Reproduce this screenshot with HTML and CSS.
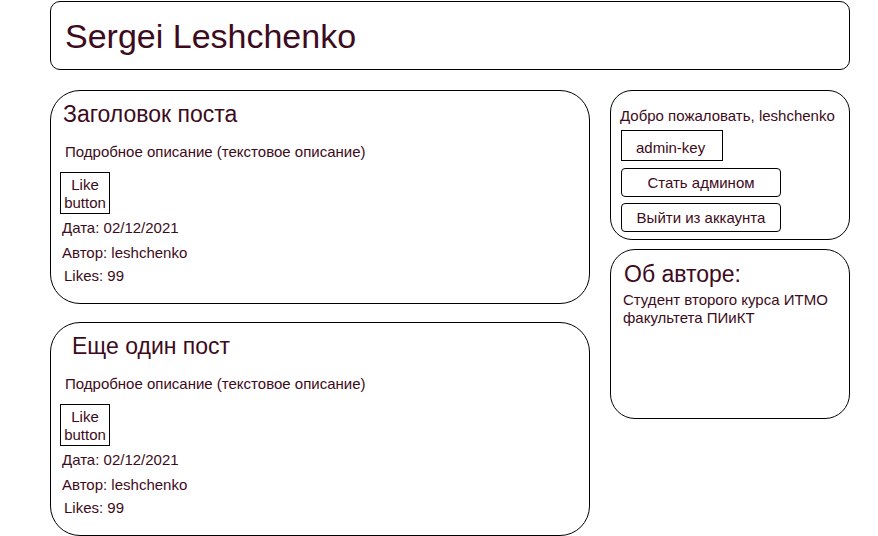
FILE: index.html
```html
<!DOCTYPE html>
<html lang="ru">
<head>
  <meta charset="UTF-8">
  <meta name="viewport" content="width=device-width, initial-scale=1.0">
  <title>Sergei Leshchenko</title>
  <link rel="stylesheet" href="styles.css">
</head>
<body>
  <div class="page">
    <header class="header">
      <h1>Sergei Leshchenko</h1>
    </header>

    <main class="main">
      <section class="posts">
        <article class="post">
          <h2 class="post-title">Заголовок поста</h2>
          <p class="post-text">Подробное описание (текстовое описание)</p>
          <button class="like">Like button</button>
          <p class="post-date">Дата: 02/12/2021</p>
          <p class="post-author">Автор: leshchenko</p>
          <p class="post-likes">Likes: 99</p>
        </article>

        <article class="post">
          <h2 class="post-title shifted">Еще один пост</h2>
          <p class="post-text">Подробное описание (текстовое описание)</p>
          <button class="like">Like button</button>
          <p class="post-date">Дата: 02/12/2021</p>
          <p class="post-author">Автор: leshchenko</p>
          <p class="post-likes">Likes: 99</p>
        </article>
      </section>

      <aside class="side">
        <div class="card user">
          <p class="welcome">Добро пожаловать, leshchenko</p>
          <input class="key" type="text" value="admin-key">
          <button class="btn">Стать админом</button>
          <button class="btn">Выйти из аккаунта</button>
        </div>

        <div class="card about">
          <h3>Об авторе:</h3>
          <p>Студент второго курса ИТМО факультета ПИиКТ</p>
        </div>
      </aside>
    </main>
  </div>
</body>
</html>
```

FILE: styles.css
```css
body {
  margin: 0;
  font-family: "Liberation Sans", Arial, sans-serif;
  font-size: 15px;
  line-height: 18px;
  color: #3d0b20;
  background: white;
}
.page {
  width: 800px;
  padding: 1px 0 0 50px;
}
.header {
  height: 69px;
  box-sizing: border-box;
  border: 1px solid #000;
  border-radius: 10px;
  display: flex;
  align-items: center;
  padding-left: 14px;
}
.header h1 {
  margin: 0;
  font-size: 34px;
  font-weight: normal;
  line-height: 40px;
}
.main {
  margin-top: 20px;
  display: grid;
  grid-template-columns: 540px 240px;
  gap: 20px;
  align-items: start;
}
.posts {
  display: flex;
  flex-direction: column;
  gap: 18px;
}
.post {
  height: 214px;
  box-sizing: border-box;
  border: 1px solid #000;
  border-radius: 30px;
  padding: 10px 0 0 10px;
}
.post p {
  margin: 0;
}
.post-title {
  margin: 0 0 0 2px;
  font-size: 23px;
  font-weight: normal;
  line-height: 26px;
}
.post-title.shifted {
  padding-left: 9px;
}
.post .post-text {
  margin: 16px 0 0 4px;
}
.like {
  display: block;
  width: 50px;
  box-sizing: border-box;
  margin: 11px 0 0 -1px;
  padding: 3px 2px 1px;
  border: 1px solid #000;
  background: white;
  font: inherit;
  color: inherit;
  text-align: center;
}
.post .post-date {
  margin: 5px 0 0 1px;
}
.post .post-author {
  margin: 7px 0 0 1px;
}
.post .post-likes {
  margin: 5px 0 0 3px;
}
.side {
  display: flex;
  flex-direction: column;
  gap: 9px;
}
.card {
  border: 1px solid #000;
  box-sizing: border-box;
}
.user {
  border-radius: 22px;
  padding: 16px 0 7px 9px;
}
.welcome {
  margin: 0;
}
.key {
  display: block;
  width: 102px;
  height: 31px;
  box-sizing: border-box;
  margin: 5px 0 0 1px;
  padding: 8px 0 5px 14px;
  border: 1px solid #000;
  border-radius: 0;
  font: inherit;
  color: inherit;
  outline: none;
}
.btn {
  display: block;
  width: 160px;
  height: 29px;
  box-sizing: border-box;
  margin: 7px 0 0 1px;
  padding: 0;
  border: 1px solid #000;
  border-radius: 4px;
  background: white;
  font: inherit;
  color: inherit;
}
.btn + .btn {
  margin-top: 6px;
}
.about {
  height: 170px;
  border-radius: 25px;
  padding: 11px 0 0 12px;
}
.about h3 {
  margin: 0 0 0 1px;
  font-size: 23px;
  font-weight: normal;
  line-height: 26px;
}
.about p {
  margin: 4px 0 0;
}
```
